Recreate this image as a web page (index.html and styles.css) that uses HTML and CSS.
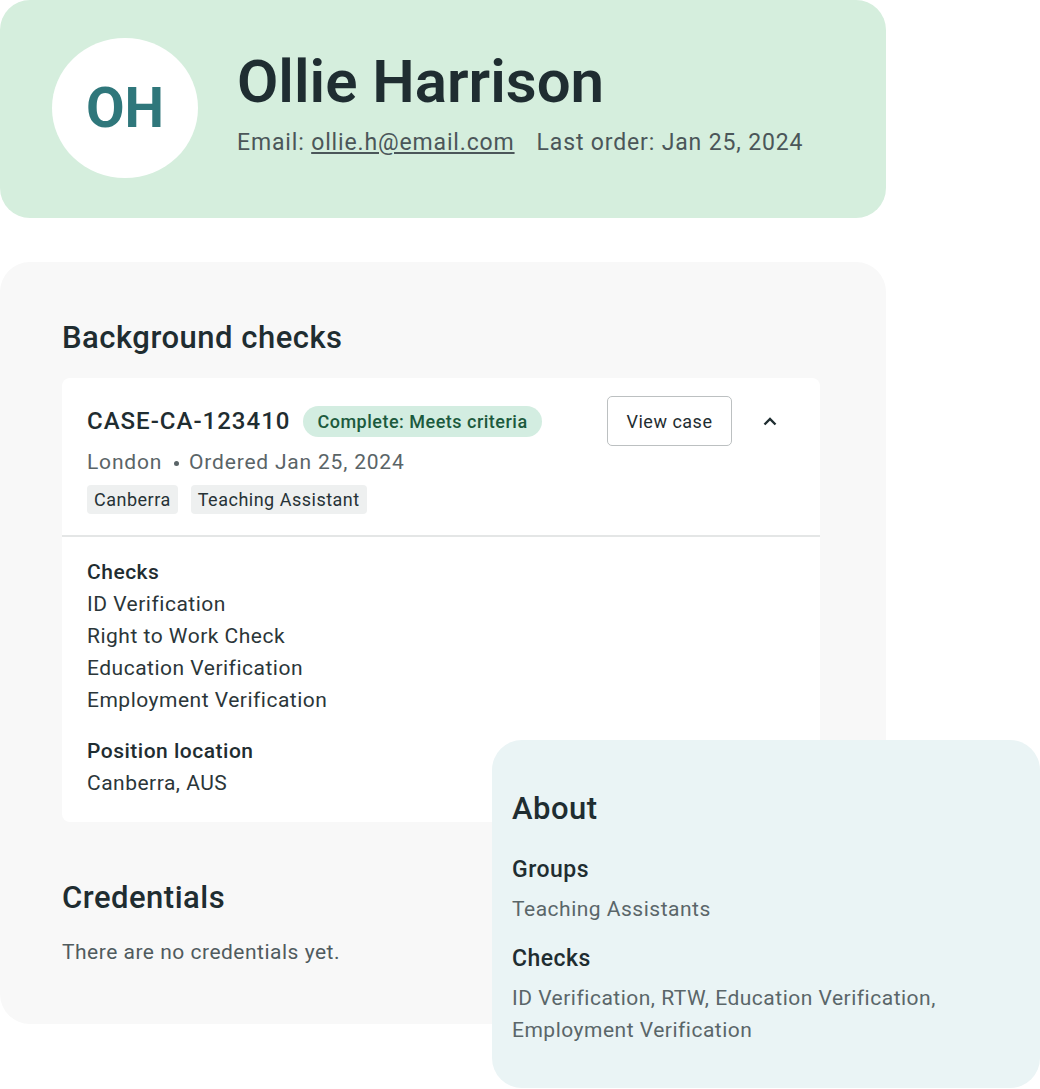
FILE: index.html
```html
<!DOCTYPE html>
<html>
    <head>
        <title>Ollie Harrison</title>
        <meta charset="utf8"/>
        <link rel="stylesheet" href="styles.css">
    </head>
    <body>
        <div class="page">
            <div class="profile">
                <div class="avatar">OH</div>
                <div class="profile-info">
                    <h1 class="name">Ollie Harrison</h1>
                    <div class="profile-meta">
                        <span>Email: <a href="#">ollie.h@email.com</a></span>
                        <span>Last order: Jan 25, 2024</span>
                    </div>
                </div>
            </div>

            <div class="panel">
                <h2 class="section-title">Background checks</h2>
                <div class="case">
                    <div class="case-head">
                        <div class="case-row">
                            <span class="case-id">CASE-CA-123410</span>
                            <span class="badge">Complete: Meets criteria</span>
                            <button class="btn">View case</button>
                            <span class="chevron">
                                <svg width="14" height="9" viewBox="0 0 14 9"><polyline points="1.5,7.5 7,2 12.5,7.5" fill="none" stroke="#1f2d31" stroke-width="2.4"/></svg>
                            </span>
                        </div>
                        <div class="case-meta">London<span class="dot"></span>Ordered Jan 25, 2024</div>
                        <div class="tags">
                            <span class="tag">Canberra</span>
                            <span class="tag">Teaching Assistant</span>
                        </div>
                    </div>
                    <div class="case-body">
                        <div class="label">Checks</div>
                        <div>ID Verification</div>
                        <div>Right to Work Check</div>
                        <div>Education Verification</div>
                        <div>Employment Verification</div>
                        <div class="label gap">Position location</div>
                        <div>Canberra, AUS</div>
                    </div>
                </div>

                <h2 class="section-title cred">Credentials</h2>
                <p class="empty">There are no credentials yet.</p>
            </div>

            <div class="about">
                <h2 class="section-title">About</h2>
                <div class="about-label">Groups</div>
                <div class="about-text">Teaching Assistants</div>
                <div class="about-label">Checks</div>
                <div class="about-text">ID Verification, RTW, Education Verification,<br>Employment Verification</div>
            </div>
        </div>
    </body>
</html>
```

FILE: styles.css
```css
*{
    box-sizing: border-box;
}
body,h1,h2,p{
    margin: 0px;
    padding: 0px;
}
body{
    background: #fff;
    font-family: Roboto, "Noto Sans", sans-serif;
    color: #1f2d31;
    letter-spacing: 0.5px;
}
.page{
    width: 1040px;
    height: 1089px;
    position: relative;
}

/* top profile card */
.profile{
    width: 886px;
    height: 218px;
    background: #d5eedd;
    border-radius: 30px;
    display: flex;
    align-items: center;
    padding-left: 52px;
    gap: 39px;
}
.avatar{
    width: 146px;
    height: 140px;
    margin-top: -2px;
    border-radius: 50%;
    background: #fff;
    display: flex;
    align-items: center;
    justify-content: center;
    font-size: 56px;
    font-weight: 700;
    letter-spacing: 0;
    color: #2f777b;
}
.profile-info{
    margin-top: -12px;
}
.name{
    font-size: 60px;
    font-weight: 600;
    line-height: 64px;
    letter-spacing: 0;
    color: #1f2d31;
}
.profile-meta{
    margin-top: 15px;
    font-size: 23px;
    letter-spacing: 0.85px;
    color: #4b5659;
    display: flex;
    gap: 22px;
}
.profile-meta a{
    color: #4b5659;
}

/* background checks panel */
.panel{
    margin-top: 44px;
    width: 886px;
    height: 762px;
    background: #f8f8f8;
    border-radius: 30px;
    padding: 58px 66px 0 62px;
}
.section-title{
    font-size: 31px;
    font-weight: 500;
    line-height: 36px;
    letter-spacing: 0.5px;
    color: #1f2d31;
}
.case{
    margin-top: 22px;
    background: #fff;
    border-radius: 8px;
}
.case-head{
    padding: 18px 25px 21px 25px;
    border-bottom: 2px solid #e4e6e6;
}
.case-row{
    display: flex;
    align-items: center;
    height: 50px;
}
.case-id{
    font-size: 24px;
    font-weight: 500;
    letter-spacing: 1px;
    color: #1f2d31;
}
.badge{
    margin-left: 13px;
    background: #d3ede1;
    color: #1c5a3d;
    font-size: 18px;
    font-weight: 500;
    padding: 0 14px;
    height: 31px;
    line-height: 31px;
    border-radius: 16px;
}
.btn{
    margin-left: auto;
    width: 125px;
    height: 50px;
    background: #fff;
    border: 1.5px solid #bcc0c1;
    border-radius: 5px;
    font-family: inherit;
    font-size: 18px;
    letter-spacing: 0.5px;
    color: #1f2d31;
}
.chevron{
    width: 14px;
    margin-left: 31px;
    margin-right: 18px;
    display: flex;
}
.case-meta{
    font-size: 21px;
    line-height: 32px;
    letter-spacing: 0.8px;
    color: #5a6467;
}
.dot{
    display: inline-block;
    width: 5px;
    height: 5px;
    border-radius: 50%;
    background: #5a6467;
    margin: 0 10px 0 12px;
    vertical-align: middle;
}
.tags{
    margin-top: 7px;
    display: flex;
    gap: 13px;
}
.tag{
    background: #eef0f0;
    border-radius: 4px;
    font-size: 18px;
    height: 29px;
    line-height: 29px;
    padding: 0 7px;
    color: #263236;
}
.case-body{
    padding: 19px 25px 23px 25px;
    font-size: 21px;
    line-height: 32px;
    color: #2b3639;
}
.label{
    font-weight: 500;
    color: #1f2d31;
}
.label.gap{
    margin-top: 19px;
}
.cred{
    margin-top: 58px;
}
.empty{
    margin-top: 20px;
    font-size: 21px;
    line-height: 32px;
    color: #505b5e;
}

/* about card lies over the panel */
.about{
    position: absolute;
    left: 492px;
    top: 740px;
    width: 548px;
    height: 348px;
    background: #eaf4f5;
    border-radius: 30px;
    padding: 51px 20px 0 20px;
}
.about-label{
    margin-top: 27px;
    font-size: 23px;
    font-weight: 500;
    line-height: 32px;
    color: #1f2d31;
}
.about-label + .about-text + .about-label{
    margin-top: 18px;
}
.about-text{
    margin-top: 7px;
    font-size: 21px;
    line-height: 32px;
    color: #5a6669;
}
```
